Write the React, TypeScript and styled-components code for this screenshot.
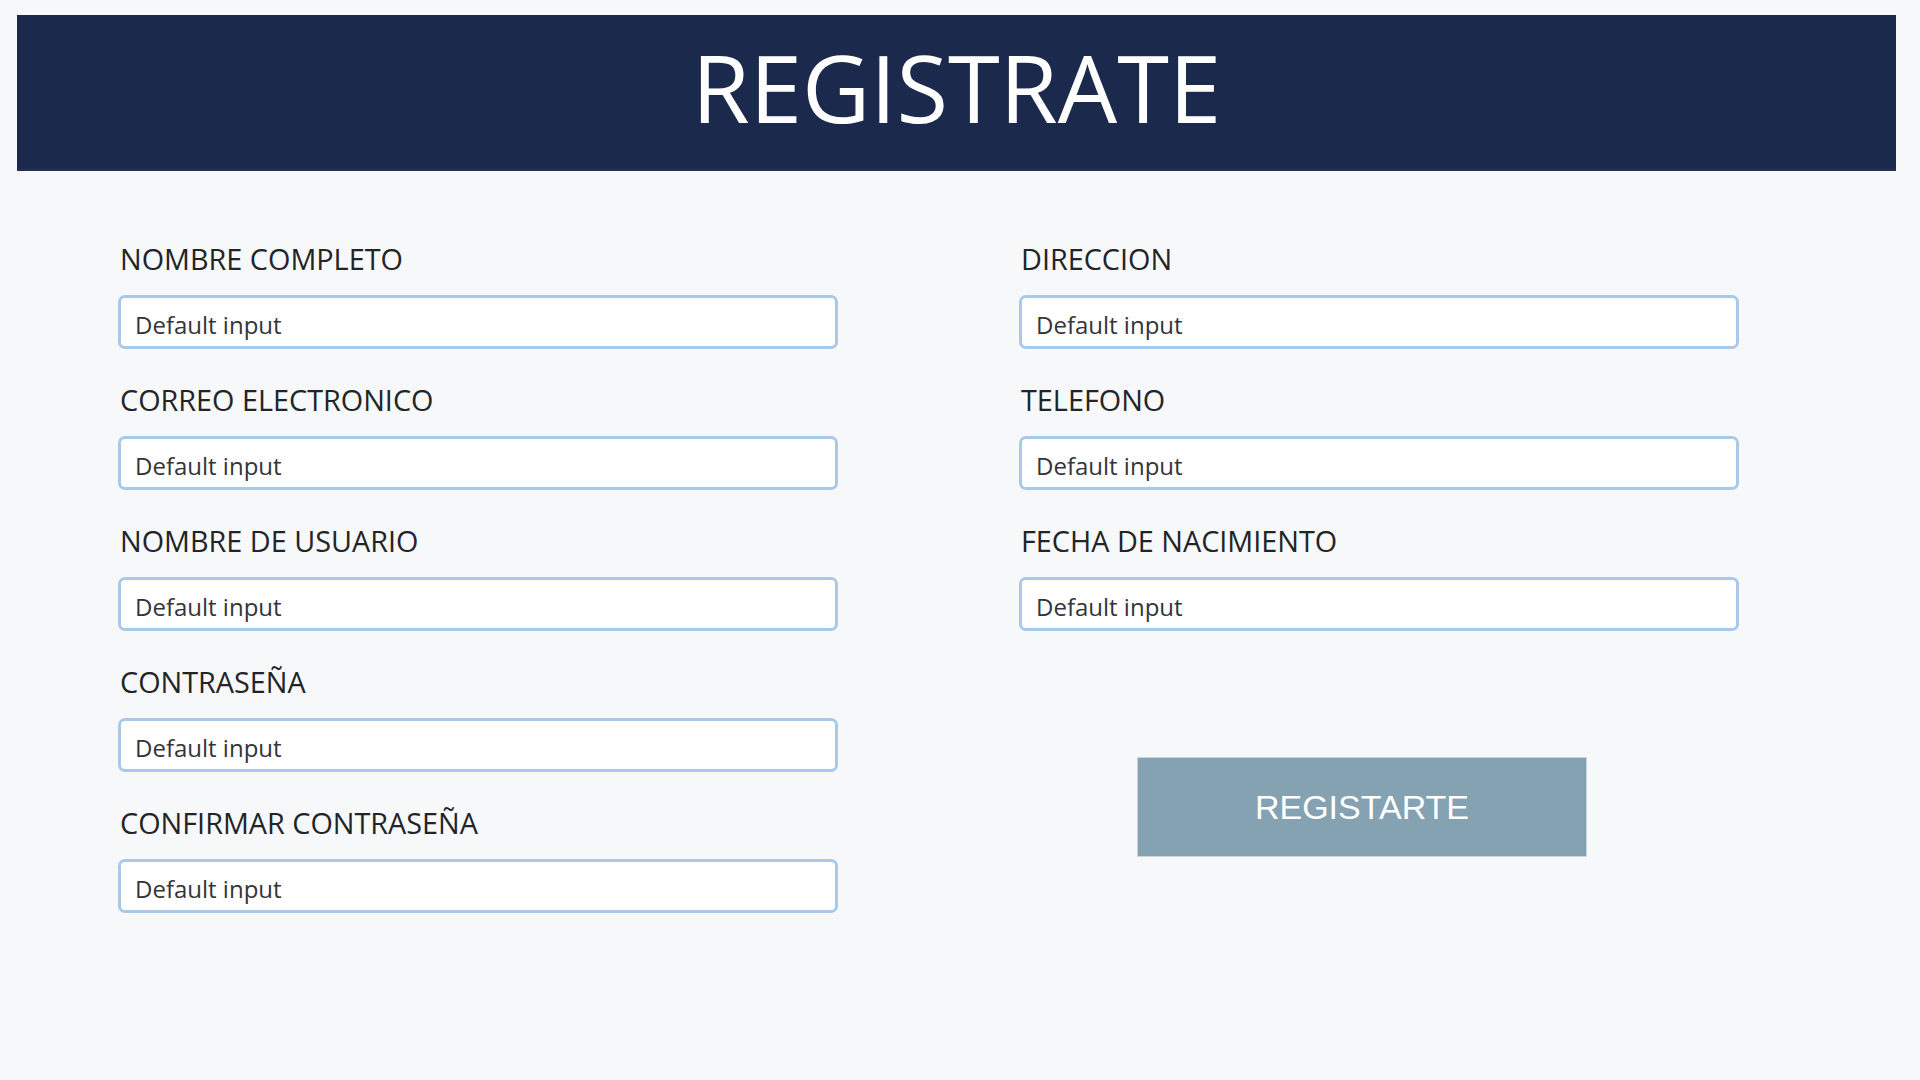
import React from "react";
import styled, { createGlobalStyle } from "styled-components";

const Global = createGlobalStyle`
  html, body {
    margin: 0;
    padding: 0;
    background: #f7f8fa;
    min-height: 100%;
  }
  body {
    font-family: "Open Sans", "Noto Sans", sans-serif;
  }
  * { box-sizing: border-box; }
`;

const Page = styled.div`
  min-height: 1080px;
  padding: 15px 24px 0 17px;
`;

const Header = styled.header`
  height: 156px;
  background: #1b294d;
  border-bottom: 2px solid #252f4c;
  display: flex;
  justify-content: center;
  align-items: flex-start;
`;

const Title = styled.h1`
  margin: 0;
  font-family: "Open Sans", sans-serif;
  font-weight: 400;
  font-size: 94px;
  line-height: 140px;
  padding-top: 2px;
  color: #ffffff;
`;

const Form = styled.form`
  display: grid;
  grid-template-columns: 720px 720px;
  column-gap: 181px;
  padding: 68px 0 0 101px;
`;

const Column = styled.div`
  display: flex;
  flex-direction: column;
  gap: 31px;
`;

const Field = styled.div`
  display: flex;
  flex-direction: column;
  gap: 17px;
`;

const Label = styled.label`
  font-family: "Open Sans", sans-serif;
  font-size: 28.8px;
  line-height: 39px;
  color: #222426;
  padding-left: 2px;
`;

const Input = styled.input`
  height: 54px;
  width: 720px;
  border: 3px solid #a9c9ea;
  border-radius: 7px;
  background: #ffffff;
  padding: 4px 15px 0 14px;
  font-family: "Open Sans", sans-serif;
  font-size: 24px;
  color: #333538;
  outline: none;
`;

const Button = styled.button`
  margin: 95px 0 0 118px;
  width: 450px;
  height: 100px;
  background: #84a2b2;
  border: 1px solid #c8d6de;
  color: #ffffff;
  font-family: "Liberation Sans", Arial, sans-serif;
  font-size: 34px;
  padding-top: 2px;
  cursor: pointer;
`;

const left = [
  "NOMBRE COMPLETO",
  "CORREO ELECTRONICO",
  "NOMBRE DE USUARIO",
  "CONTRASEÑA",
  "CONFIRMAR CONTRASEÑA",
];
const right = ["DIRECCION", "TELEFONO", "FECHA DE NACIMIENTO"];

const FieldItem = ({ label }: { label: string }) => (
  <Field>
    <Label>{label}</Label>
    <Input defaultValue="Default input" />
  </Field>
);

export default function App() {
  return (
    <>
      <Global />
      <Page>
        <Header>
          <Title>REGISTRATE</Title>
        </Header>
        <Form onSubmit={(e) => e.preventDefault()}>
          <Column>
            {left.map((l) => (
              <FieldItem key={l} label={l} />
            ))}
          </Column>
          <Column>
            {right.map((l) => (
              <FieldItem key={l} label={l} />
            ))}
            <Button type="submit">REGISTARTE</Button>
          </Column>
        </Form>
      </Page>
    </>
  );
}
